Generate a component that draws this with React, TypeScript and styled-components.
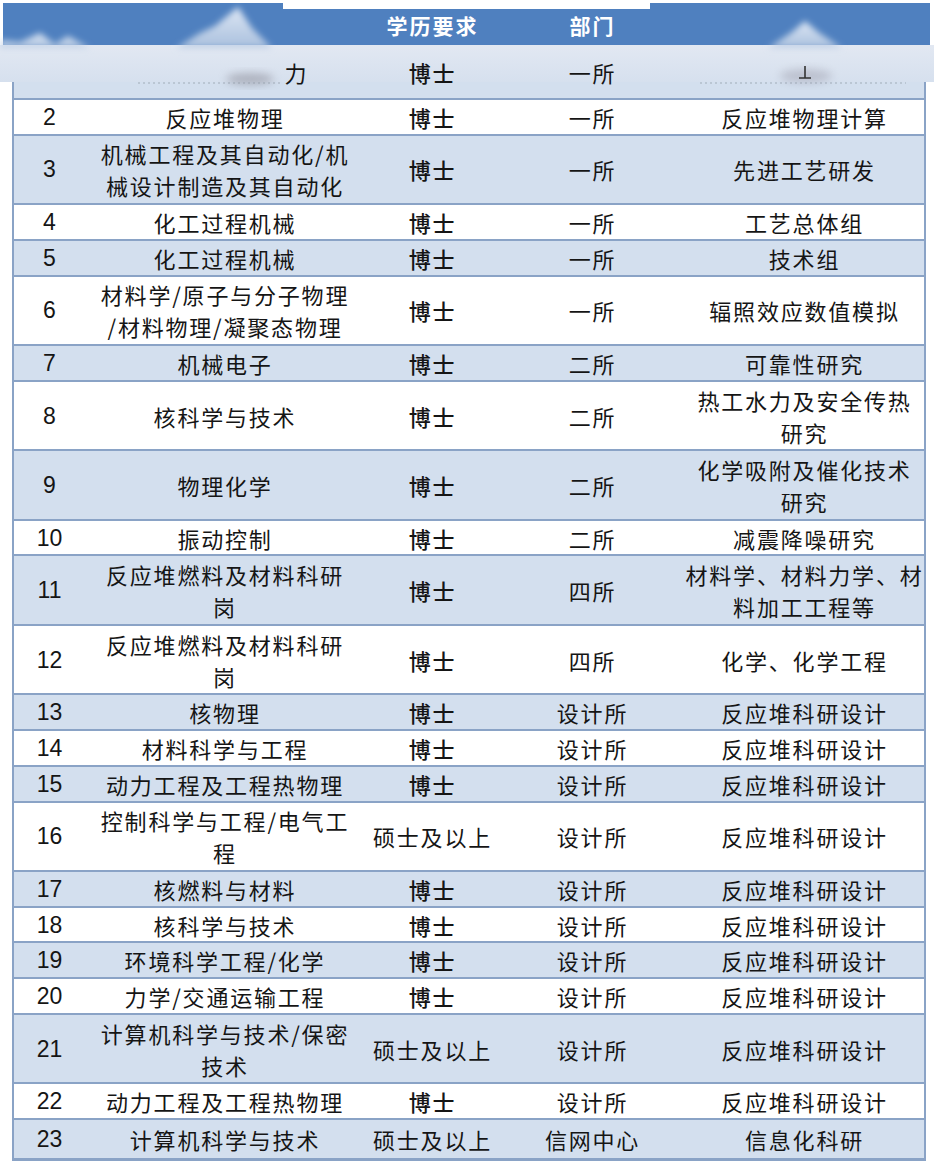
import styled, { createGlobalStyle } from "styled-components";

type Row = {
  no: string;
  major: string;
  edu: string;
  dept: string;
  dir: string;
};

const rows: Row[] = [
  { no: "2", major: "反应堆物理", edu: "博士", dept: "一所", dir: "反应堆物理计算" },
  { no: "3", major: "机械工程及其自动化/机\n械设计制造及其自动化", edu: "博士", dept: "一所", dir: "先进工艺研发" },
  { no: "4", major: "化工过程机械", edu: "博士", dept: "一所", dir: "工艺总体组" },
  { no: "5", major: "化工过程机械", edu: "博士", dept: "一所", dir: "技术组" },
  { no: "6", major: "材料学/原子与分子物理\n/材料物理/凝聚态物理", edu: "博士", dept: "一所", dir: "辐照效应数值模拟" },
  { no: "7", major: "机械电子", edu: "博士", dept: "二所", dir: "可靠性研究" },
  { no: "8", major: "核科学与技术", edu: "博士", dept: "二所", dir: "热工水力及安全传热\n研究" },
  { no: "9", major: "物理化学", edu: "博士", dept: "二所", dir: "化学吸附及催化技术\n研究" },
  { no: "10", major: "振动控制", edu: "博士", dept: "二所", dir: "减震降噪研究" },
  { no: "11", major: "反应堆燃料及材料科研\n岗", edu: "博士", dept: "四所", dir: "材料学、材料力学、材\n料加工工程等" },
  { no: "12", major: "反应堆燃料及材料科研\n岗", edu: "博士", dept: "四所", dir: "化学、化学工程" },
  { no: "13", major: "核物理", edu: "博士", dept: "设计所", dir: "反应堆科研设计" },
  { no: "14", major: "材料科学与工程", edu: "博士", dept: "设计所", dir: "反应堆科研设计" },
  { no: "15", major: "动力工程及工程热物理", edu: "博士", dept: "设计所", dir: "反应堆科研设计" },
  { no: "16", major: "控制科学与工程/电气工\n程", edu: "硕士及以上", dept: "设计所", dir: "反应堆科研设计" },
  { no: "17", major: "核燃料与材料", edu: "博士", dept: "设计所", dir: "反应堆科研设计" },
  { no: "18", major: "核科学与技术", edu: "博士", dept: "设计所", dir: "反应堆科研设计" },
  { no: "19", major: "环境科学工程/化学", edu: "博士", dept: "设计所", dir: "反应堆科研设计" },
  { no: "20", major: "力学/交通运输工程", edu: "博士", dept: "设计所", dir: "反应堆科研设计" },
  { no: "21", major: "计算机科学与技术/保密\n技术", edu: "硕士及以上", dept: "设计所", dir: "反应堆科研设计" },
  { no: "22", major: "动力工程及工程热物理", edu: "博士", dept: "设计所", dir: "反应堆科研设计" },
  { no: "23", major: "计算机科学与技术", edu: "硕士及以上", dept: "信网中心", dir: "信息化科研" },
];

const GlobalStyle = createGlobalStyle`
  body {
    margin: 0;
    background: #ffffff;
    font-family: "Noto Sans CJK SC", "Noto Sans", sans-serif;
    color: #161616;
  }
`;

const COLS = "71px 280px 135px 185px 239px";

function Watermark() {
  return (
    <Overlay width="936" height="90" viewBox="0 0 936 90">
      <defs>
        <linearGradient id="band" x1="0" y1="0" x2="0" y2="1">
          <stop offset="0" stopColor="#e2e8f2" />
          <stop offset="1" stopColor="#d6e0ee" />
        </linearGradient>
        <linearGradient id="peak" x1="0" y1="0" x2="0" y2="1">
          <stop offset="0" stopColor="#eef3fa" stopOpacity="0.9" />
          <stop offset="1" stopColor="#b9cbe3" stopOpacity="0.85" />
        </linearGradient>
        <filter id="soft" x="-20%" y="-20%" width="140%" height="140%">
          <feGaussianBlur stdDeviation="3" />
        </filter>
        <filter id="smudge" x="-50%" y="-50%" width="200%" height="200%">
          <feGaussianBlur stdDeviation="4" />
        </filter>
      </defs>
      <rect x="283" y="0" width="367" height="9" fill="#ffffff" />
      <rect x="0" y="45" width="934" height="37" fill="url(#band)" />
      <g filter="url(#soft)">
        <polygon points="0,48 0,40 20,42 40,33 55,44 68,36 90,48" fill="url(#peak)" />
        <polygon points="176,48 200,33 215,26 238,7 252,28 272,48" fill="url(#peak)" />
        <polygon points="768,48 792,32 805,21 818,32 842,48" fill="url(#peak)" />
      </g>
      <ellipse cx="250" cy="79" rx="24" ry="6" fill="#8b8b96" opacity="0.55" filter="url(#smudge)" />
      <ellipse cx="806" cy="76" rx="26" ry="7" fill="#9a9aa8" opacity="0.45" filter="url(#smudge)" />
      <path d="M805 66 L805 78 M799 78 L811 78" stroke="#333" strokeWidth="1.6" />
      <line x1="138" y1="83" x2="282" y2="83" stroke="#8e97a3" strokeWidth="1.2" strokeDasharray="2 3" opacity="0.7" />
      <line x1="700" y1="83" x2="906" y2="83" stroke="#8e97a3" strokeWidth="1.2" strokeDasharray="2 3" opacity="0.7" />
    </Overlay>
  );
}

export default function App() {
  return (
    <>
      <GlobalStyle />
      <Sheet>
        <Watermark />
        <Header>
          <HeadCell />
          <HeadCell />
          <HeadCell>学历要求</HeadCell>
          <HeadCell>部门</HeadCell>
          <HeadCell />
        </Header>
        <Table>
          <TableRow $shade $height={52}>
            <NumCell />
            <Cell>{"　　　　　　力"}</Cell>
            <Cell $strong>博士</Cell>
            <Cell>一所</Cell>
            <Cell />
          </TableRow>
          {rows.map((r, i) => {
            const lines = Math.max(r.major.split("\n").length, r.dir.split("\n").length);
            const last = i === rows.length - 1;
            const height = last ? 38 : lines > 1 ? 67.5 : 33.7;
            return (
              <TableRow key={r.no} $shade={i % 2 === 1} $height={height} $last={last}>
                <NumCell>{r.no}</NumCell>
                <Cell>{r.major}</Cell>
                <Cell $strong={r.edu === "博士"}>{r.edu}</Cell>
                <Cell>{r.dept}</Cell>
                <Cell>{r.dir}</Cell>
              </TableRow>
            );
          })}
        </Table>
      </Sheet>
    </>
  );
}

const Sheet = styled.div`
  position: relative;
  width: 936px;
  padding-top: 3px;
`;

const Overlay = styled.svg`
  position: absolute;
  left: 0;
  top: 0;
  z-index: 1;
  pointer-events: none;
`;

const Header = styled.div`
  display: grid;
  grid-template-columns: ${COLS};
  margin-left: 3px;
  width: 927px;
  box-sizing: border-box;
  padding: 0 6px 0 11px;
  height: 43px;
  background: #4f80bf;
`;

const HeadCell = styled.div`
  position: relative;
  z-index: 2;
  display: flex;
  align-items: center;
  justify-content: center;
  color: #ffffff;
  font-size: 21px;
  font-weight: 700;
  letter-spacing: 2px;
`;

const Table = styled.div`
  margin-left: 12px;
  width: 914px;
  box-sizing: border-box;
  border-left: 2px solid #8aa3c6;
  border-right: 2px solid #8aa3c6;
`;

const TableRow = styled.div<{ $shade?: boolean; $height: number; $last?: boolean }>`
  display: grid;
  grid-template-columns: ${COLS};
  height: ${(p) => p.$height}px;
  background: ${(p) => (p.$shade ? "#d3dfee" : "#ffffff")};
  border-bottom: ${(p) => (p.$last ? 3 : 2)}px solid #8aa3c6;
`;

const Cell = styled.div<{ $strong?: boolean }>`
  position: relative;
  z-index: 2;
  display: flex;
  align-items: center;
  justify-content: center;
  text-align: center;
  white-space: pre;
  font-size: 22px;
  line-height: 32px;
  letter-spacing: 1.8px;
  font-weight: ${(p) => (p.$strong ? 500 : 400)};
  color: #151515;
`;

const NumCell = styled(Cell)`
  font-family: "Liberation Sans", "DejaVu Sans", sans-serif;
  font-size: 23px;
  letter-spacing: 0;
`;
